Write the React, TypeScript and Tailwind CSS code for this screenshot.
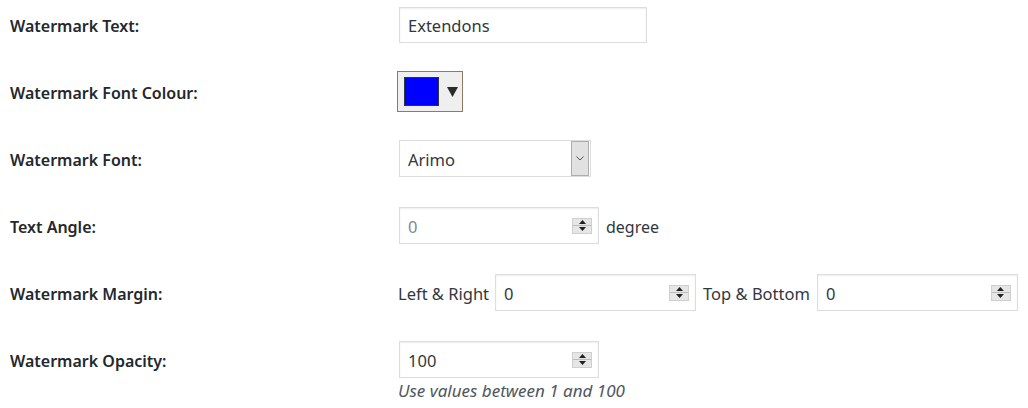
import React from 'react'

const FONT = { fontFamily: '"Noto Sans", "Open Sans", Arial, sans-serif' }

function Spinner() {
  return (
    <div className="flex flex-col w-[20px] h-[16px] border border-[#cfcfcf] bg-[#e6e6e6]">
      <div className="flex-1 flex items-center justify-center border-b border-[#bdbdbd]">
        <svg width="7" height="4" viewBox="0 0 7 4"><path d="M0 4 L3.5 0 L7 4 Z" fill="#222" /></svg>
      </div>
      <div className="flex-1 flex items-center justify-center">
        <svg width="7" height="4" viewBox="0 0 7 4"><path d="M0 0 L3.5 4 L7 0 Z" fill="#222" /></svg>
      </div>
    </div>
  )
}

function NumberBox({ value, muted, width = 'w-[200px]' }: { value: string; muted?: boolean; width?: string }) {
  return (
    <div className={`${width} h-[37px] flex items-center justify-between border border-[#ddd] bg-white shadow-[inset_0_1px_2px_rgba(0,0,0,0.07)] pl-[8px] pr-[6px]`}>
      <span className={`pt-[3px] text-[16.5px] ${muted ? 'text-[#7e8993]' : 'text-[#32373c]'}`}>{value}</span>
      <Spinner />
    </div>
  )
}

function Row({ label, children }: { label: string; children: React.ReactNode }) {
  return (
    <div className="flex items-center h-[67px]">
      <div className="w-[398px] shrink-0 pl-[10px] pt-[3px] text-[16px] font-semibold text-[#23282d]">{label}</div>
      <div className="flex-1">{children}</div>
    </div>
  )
}

export default function App() {
  return (
    <div className="w-[1028px] h-[408px] bg-white overflow-hidden" style={FONT}>
      <div className="flex flex-col">
        <div className="-mt-[9px]" />
        <Row label="Watermark Text:">
          <div className="w-[248px] h-[36px] ml-[1px] flex items-center border border-[#ddd] bg-white shadow-[inset_0_1px_2px_rgba(0,0,0,0.07)] pl-[8px] pt-[3px] text-[16.5px] text-[#32373c]">
            Extendons
          </div>
        </Row>

        <Row label="Watermark Font Colour:">
          <div className="w-[66px] h-[41px] -ml-[1px] flex items-center border border-[#8f7a66] bg-[#efefef] pl-[6px] gap-[8px]">
            <div className="w-[35px] h-[29px] bg-[#0000ff] border border-[#333]" />
            <svg width="11" height="10" viewBox="0 0 11 10"><path d="M0 0 L11 0 L5.5 10 Z" fill="#2b2b2b" /></svg>
          </div>
        </Row>

        <Row label="Watermark Font:">
          <div className="w-[192px] h-[37px] ml-[1px] flex items-center justify-between border border-[#ddd] bg-white pl-[8px] pr-[1px]">
            <span className="pt-[3px] text-[16.5px] text-[#32373c]">Arimo</span>
            <div className="w-[18px] h-[35px] flex items-center justify-center bg-[#e1e1e1] border border-[#adadad]">
              <svg width="8" height="5" viewBox="0 0 8 5"><path d="M0.5 0.5 L4 4 L7.5 0.5" stroke="#555" strokeWidth="1" fill="none" /></svg>
            </div>
          </div>
        </Row>

        <Row label="Text Angle:">
          <div className="flex items-center gap-[7px] ml-[1px]">
            <NumberBox value="0" muted />
            <span className="pt-[3px] text-[16px] text-[#32373c]">degree</span>
          </div>
        </Row>

        <Row label="Watermark Margin:">
          <div className="flex items-center">
            <span className="pt-[3px] text-[16.5px] text-[#32373c] mr-[6px]">Left &amp; Right</span>
            <NumberBox value="0" width="w-[201px]" />
            <span className="pt-[3px] text-[16.5px] text-[#32373c] ml-[7px] mr-[7px]">Top &amp; Bottom</span>
            <NumberBox value="0" width="w-[201px]" />
          </div>
        </Row>

        <Row label="Watermark Opacity:">
          <div className="relative ml-[1px]">
            <NumberBox value="100" />
            <div className="absolute -left-[1px] top-[37px] text-[17px] italic text-[#50575e] whitespace-nowrap">Use values between 1 and 100</div>
          </div>
        </Row>
      </div>
    </div>
  )
}
